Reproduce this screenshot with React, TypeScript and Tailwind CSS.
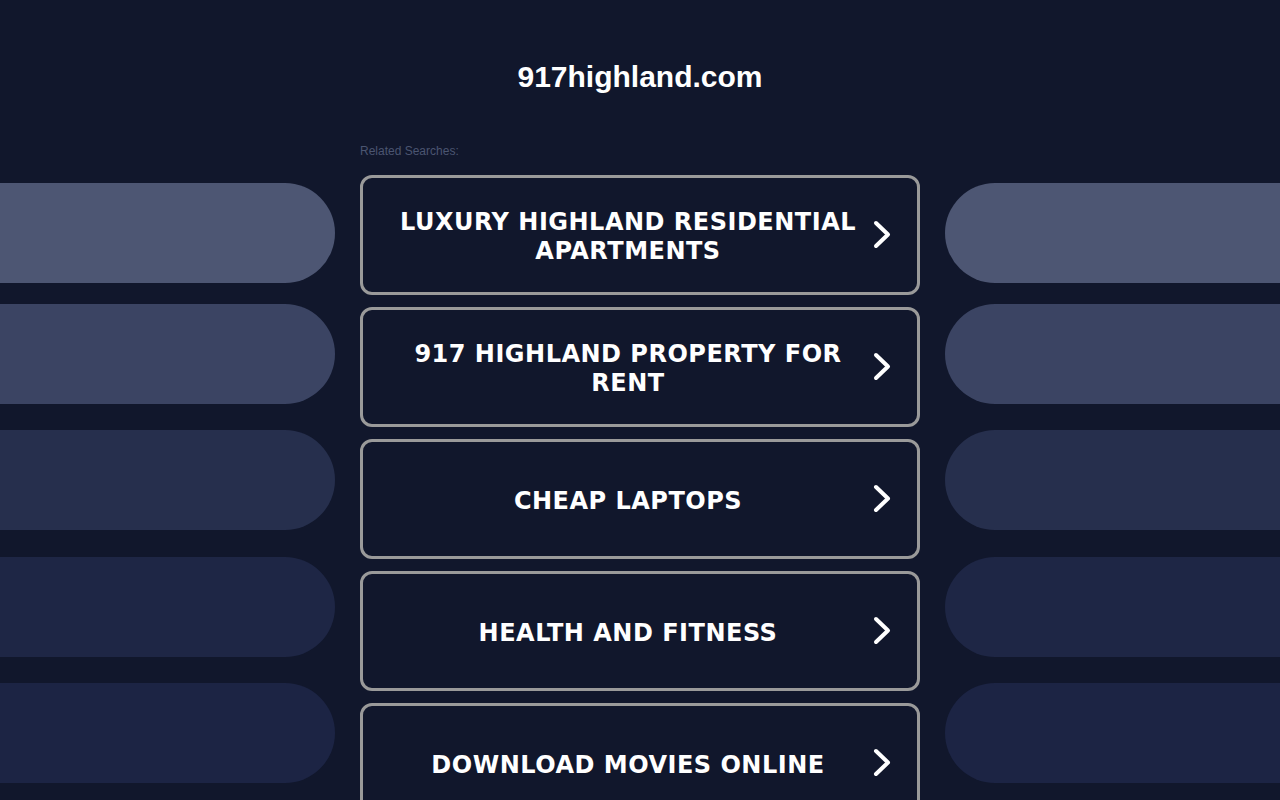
const searches = [
  "LUXURY HIGHLAND RESIDENTIAL APARTMENTS",
  "917 HIGHLAND PROPERTY FOR RENT",
  "CHEAP LAPTOPS",
  "HEALTH AND FITNESS",
  "DOWNLOAD MOVIES ONLINE",
];

const pills = [
  { color: "bg-[#4d5673]", margin: "mt-10" },
  { color: "bg-[#3b4463]", margin: "mt-[21px]" },
  { color: "bg-[#262f4d]", margin: "mt-[26px]" },
  { color: "bg-[#1e2645]", margin: "mt-[27px]" },
  { color: "bg-[#1c2444]", margin: "mt-[26px]" },
];

function Chevron() {
  return (
    <svg width="18" height="30" viewBox="0 0 18 30" className="shrink-0">
      <polyline
        points="3,3 15,14.5 3,26"
        fill="none"
        stroke="#ffffff"
        strokeWidth="4"
        strokeLinecap="round"
        strokeLinejoin="round"
      />
    </svg>
  );
}

export default function App() {
  return (
    <div className="h-[800px] w-full overflow-hidden bg-[#11172c] font-['Liberation_Sans',Arial,sans-serif]">
      <h1 className="pt-[60px] text-center text-[30px] font-bold leading-[34px] text-white">
        917highland.com
      </h1>
      <div className="mt-[49px] flex gap-[25px]">
        <div className="flex w-[335px] shrink-0 flex-col">
          {pills.map((pill, i) => (
            <div key={i} className={`${pill.margin} h-[100px] rounded-r-[50px] ${pill.color}`} />
          ))}
        </div>

        <div className="w-[560px] shrink-0">
          <p className="mb-[18px] pt-px text-[12px] leading-[14px] text-[#4b5571]">Related Searches:</p>
          <div className="-mt-px flex flex-col gap-3">
            {searches.map((label) => (
              <a
                key={label}
                href="#"
                className="flex h-[120px] items-center rounded-[12px] border-[3px] border-[#9a9a9a] bg-[#11172c] pl-5 pr-[26px]"
              >
                <span className="mt-1 flex-1 text-center font-['DejaVu_Sans',Verdana,sans-serif] text-[24px] font-bold leading-[29px] tracking-[0.5px] text-white">
                  {label}
                </span>
                <Chevron />
              </a>
            ))}
          </div>
        </div>

        <div className="flex w-[335px] shrink-0 flex-col">
          {pills.map((pill, i) => (
            <div key={i} className={`${pill.margin} h-[100px] rounded-l-[50px] ${pill.color}`} />
          ))}
        </div>
      </div>
    </div>
  );
}
